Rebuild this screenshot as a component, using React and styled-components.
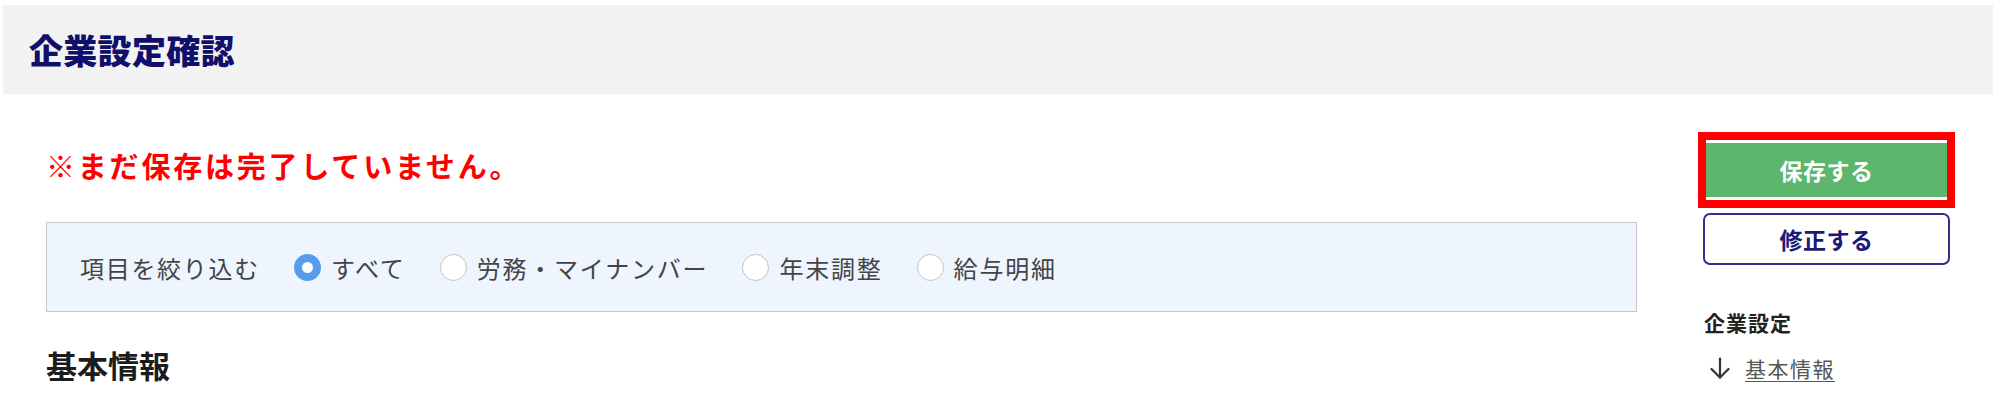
import React from "react";
import styled, { createGlobalStyle } from "styled-components";

const GlobalStyle = createGlobalStyle`
  html, body { margin: 0; padding: 0; background: #fff; }
  body { font-family: "Noto Sans CJK JP", "Noto Sans", sans-serif; color: #333; }
`;

const Page = styled.div`
  padding: 5px 7px 0 3px;
  width: 2000px;
  box-sizing: border-box;
`;

const Header = styled.header`
  height: 89px;
  background: #f2f2f2;
  display: flex;
  align-items: center;
  padding-left: 26px;
`;

const Title = styled.h1`
  margin: 0;
  font-size: 34px;
  line-height: 40px;
  font-weight: 900;
  letter-spacing: 0.3px;
  color: #10106a;
`;

const Body = styled.div`
  display: flex;
  align-items: flex-start;
  padding-left: 43px;
  gap: 61px;
`;

const Main = styled.main`
  width: 1591px;
  display: flex;
  flex-direction: column;
`;

const Notice = styled.p`
  margin: 51px 0 0;
  font-size: 29px;
  line-height: 40px;
  font-weight: 700;
  letter-spacing: 2.8px;
  color: #ff0000;
`;

const FilterBox = styled.div`
  margin-top: 37px;
  height: 88px;
  border: 1px solid #c6c6c6;
  background: #eef5fe;
  display: flex;
  align-items: center;
  padding-left: 33px;
  gap: 34px;
`;

const FilterLabel = styled.span`
  font-size: 24px;
  letter-spacing: 1.7px;
  color: #444;
`;

const Options = styled.div`
  display: flex;
  align-items: center;
  gap: 34px;
`;

const Option = styled.label`
  display: flex;
  align-items: center;
  gap: 10px;
  font-size: 24px;
  letter-spacing: 1.8px;
  color: #444;
`;

const Radio = styled.span`
  width: 27px;
  height: 27px;
  border-radius: 50%;
  box-sizing: border-box;
  background: #fff;
  border: ${(p) => (p.$checked ? "8.5px solid #5a9bee" : "1px solid #c2c2c2")};
`;

const SectionHeading = styled.h2`
  margin: 33px 0 0;
  font-size: 31px;
  line-height: 40px;
  font-weight: 700;
  letter-spacing: 0px;
  color: #1c1c1c;
`;

const Side = styled.aside`
  width: 257px;
  margin-top: 38px;
  display: flex;
  flex-direction: column;
`;

const Highlight = styled.div`
  border: 8px solid #ff0000;
  padding: 3px 0;
  background: #fff;
`;

const SaveButton = styled.button`
  display: block;
  width: 100%;
  height: 54px;
  border: none;
  background: #5cb66b;
  color: #fff;
  font-family: inherit;
  font-size: 23px;
  font-weight: 700;
  letter-spacing: 0.5px;
`;

const EditButton = styled.button`
  margin: 5px 0 0 5px;
  width: 247px;
  height: 52px;
  border: 2px solid #2f2f8c;
  border-radius: 7px;
  background: #fff;
  color: #1a1a78;
  font-family: inherit;
  font-size: 23px;
  font-weight: 700;
  letter-spacing: 0.5px;
`;

const NavTitle = styled.div`
  margin: 42px 0 0 6px;
  font-size: 21px;
  line-height: 30px;
  font-weight: 700;
  letter-spacing: 1px;
  color: #222;
`;

const NavLink = styled.a`
  margin: 16px 0 0 11px;
  display: flex;
  align-items: center;
  gap: 14px;
  font-size: 21px;
  line-height: 30px;
  letter-spacing: 1.5px;
  color: #555;
  text-decoration: none;
`;

const NavText = styled.span`
  text-decoration: underline;
  text-underline-offset: 4px;
  text-decoration-thickness: 1px;
`;

const ArrowDown = () => (
  <svg width="22" height="22" viewBox="0 0 22 22" fill="none" stroke="#333" strokeWidth="2.2" strokeLinecap="round" strokeLinejoin="round">
    <path d="M11 1.5v19" />
    <path d="M2.5 12l8.5 8.5 8.5-8.5" />
  </svg>
);

const options = [
  { label: "すべて", checked: true },
  { label: "労務・マイナンバー" },
  { label: "年末調整" },
  { label: "給与明細" },
];

export default function App() {
  return (
    <>
      <GlobalStyle />
      <Page>
        <Header>
          <Title>企業設定確認</Title>
        </Header>
        <Body>
          <Main>
            <Notice>※まだ保存は完了していません。</Notice>
            <FilterBox>
              <FilterLabel>項目を絞り込む</FilterLabel>
              <Options>
                {options.map((o) => (
                  <Option key={o.label}>
                    <Radio $checked={o.checked} />
                    {o.label}
                  </Option>
                ))}
              </Options>
            </FilterBox>
            <SectionHeading>基本情報</SectionHeading>
          </Main>
          <Side>
            <Highlight>
              <SaveButton>保存する</SaveButton>
            </Highlight>
            <EditButton>修正する</EditButton>
            <NavTitle>企業設定</NavTitle>
            <NavLink href="#">
              <ArrowDown />
              <NavText>基本情報</NavText>
            </NavLink>
          </Side>
        </Body>
      </Page>
    </>
  );
}
